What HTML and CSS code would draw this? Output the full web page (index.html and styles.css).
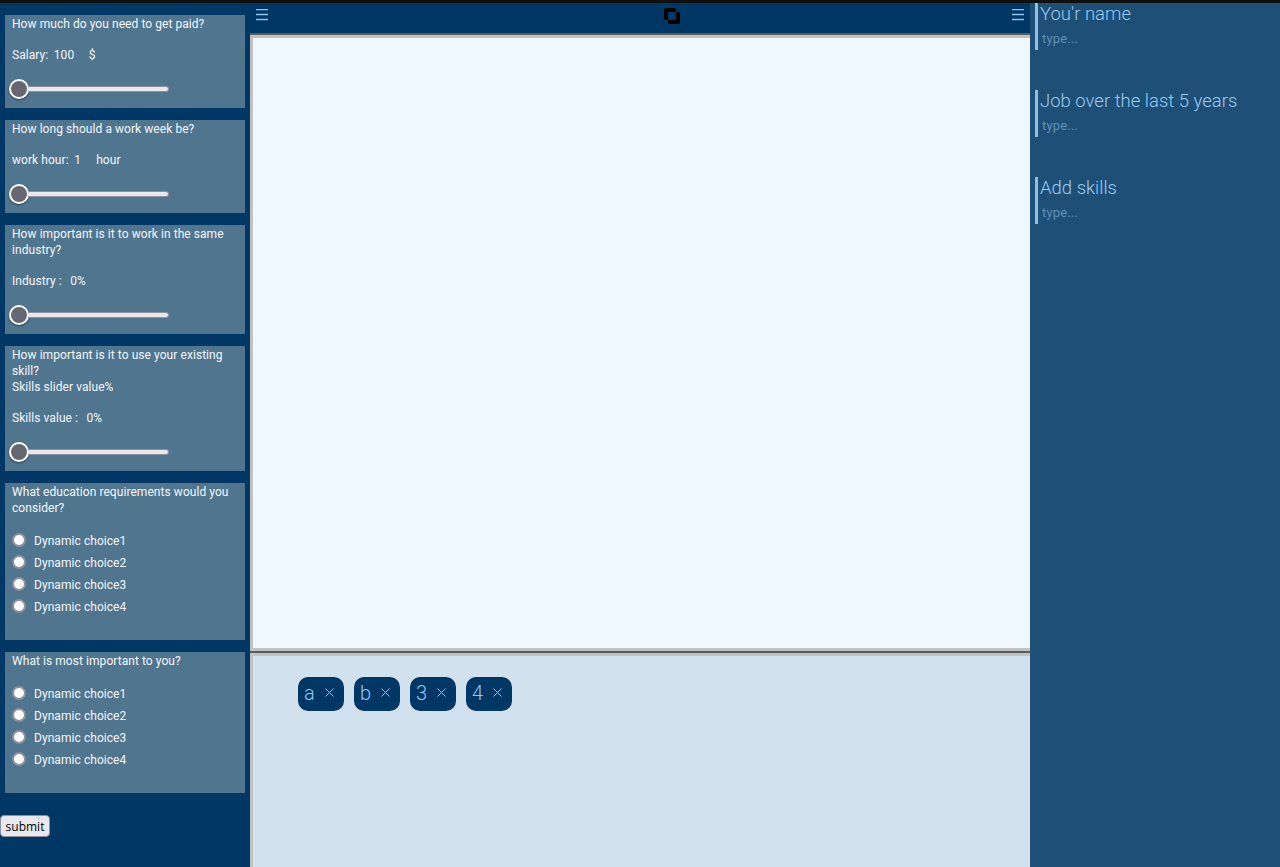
FILE: index.html
```html
<!DOCTYPE html>
<html lang="en">
<head>
<meta charset="utf-8">
<title>Job survey</title>
<link rel="stylesheet" href="styles.css">
</head>
<body>
<div class="app">
  <aside class="survey">
    <section class="card">
      <p class="question">How much do you need to get paid?</p>
      <p class="value"><span class="label">Salary:</span><span class="amount">100</span><span>$</span></p>
      <div class="slider"><span class="thumb"></span><span class="track"></span></div>
    </section>
    <section class="card">
      <p class="question">How long should a work week be?</p>
      <p class="value"><span class="label">work hour:</span><span class="amount short">1</span><span>hour</span></p>
      <div class="slider"><span class="thumb"></span><span class="track"></span></div>
    </section>
    <section class="card">
      <p class="question">How important is it to work in the same industry?</p>
      <p class="value"><span class="label wide">Industry :</span><span>0%</span></p>
      <div class="slider"><span class="thumb"></span><span class="track"></span></div>
    </section>
    <section class="card">
      <p class="question">How important is it to use your existing skill?<br>Skills slider value%</p>
      <p class="value"><span class="label wide">Skills value :</span><span>0%</span></p>
      <div class="slider"><span class="thumb"></span><span class="track"></span></div>
    </section>
    <section class="card">
      <p class="question">What education requirements would you consider?</p>
      <ul class="choices">
        <li><span class="radio"></span>Dynamic choice1</li>
        <li><span class="radio"></span>Dynamic choice2</li>
        <li><span class="radio"></span>Dynamic choice3</li>
        <li><span class="radio"></span>Dynamic choice4</li>
      </ul>
    </section>
    <section class="card">
      <p class="question">What is most important to you?</p>
      <ul class="choices">
        <li><span class="radio"></span>Dynamic choice1</li>
        <li><span class="radio"></span>Dynamic choice2</li>
        <li><span class="radio"></span>Dynamic choice3</li>
        <li><span class="radio"></span>Dynamic choice4</li>
      </ul>
    </section>
    <button class="submit">submit</button>
  </aside>
  <main class="center">
    <header class="bar">
      <svg class="menu" width="12" height="12" viewBox="0 0 12 12"><path d="M0 .5H12M0 5.5H12M0 10.5H12"/></svg>
      <svg class="logo" width="16" height="16" viewBox="0 0 16 16"><path fill-rule="evenodd" d="M1.5 0H10.5Q12 0 12 1.5V4H14.5Q16 4 16 5.500V14.500Q16 16 14.500 16H5.500Q4 16 4 14.500V12H1.500Q0 12 0 10.500V1.500Q0 0 1.500 0ZM4 4V12H12V4Z"/></svg>
      <svg class="menu" width="12" height="12" viewBox="0 0 12 12"><path d="M0 .5H12M0 5.5H12M0 10.5H12"/></svg>
    </header>
    <div class="canvas"></div>
    <div class="tags">
      <span class="tag">a<svg width="9" height="9" viewBox="0 0 9 9"><path d="M.5 .5L8.500 8.500M8.500 .5L.5 8.500"/></svg></span>
      <span class="tag">b<svg width="9" height="9" viewBox="0 0 9 9"><path d="M.5 .5L8.500 8.500M8.500 .5L.5 8.500"/></svg></span>
      <span class="tag">3<svg width="9" height="9" viewBox="0 0 9 9"><path d="M.5 .5L8.500 8.500M8.500 .5L.5 8.500"/></svg></span>
      <span class="tag">4<svg width="9" height="9" viewBox="0 0 9 9"><path d="M.5 .5L8.500 8.500M8.500 .5L.5 8.500"/></svg></span>
    </div>
  </main>
  <aside class="profile">
    <div class="field"><h2>You'r name</h2><p>type...</p></div>
    <div class="field"><h2>Job over the last 5 years</h2><p>type...</p></div>
    <div class="field"><h2>Add skills</h2><p>type...</p></div>
  </aside>
</div>
</body>
</html>
```
FILE: styles.css
```css
* { box-sizing: border-box; margin: 0; padding: 0; }
body {
  font-family: Roboto, sans-serif;
  font-size: 12px;
  line-height: 16px;
  background: #003764;
  overflow: hidden;
}
.app {
  display: grid;
  grid-template-columns: 250px 780px 250px;
  height: 867px;
  border-top: 3px solid #0f100d;
}
.survey {
  display: flex;
  flex-direction: column;
  align-items: stretch;
  gap: 12px;
  padding: 12px 5px 0;
  background: #003764;
  color: #f3f7fa;
}
.card { background: #50758f; padding: 1px 7px 0; letter-spacing: 0.06px; }
.value { display: flex; margin-top: 15px; }
.label { margin-right: 5.5px; }
.label.wide { margin-right: 8.5px; }
.amount { width: 35px; }
.amount.short { width: 22px; }
.slider {
  display: flex;
  align-items: center;
  height: 20px;
  width: 160px;
  margin: 16px 0 9px -3px;
}
.thumb {
  width: 20px;
  height: 20px;
  border: 2px solid #fff;
  border-radius: 50%;
  background: #676774;
  box-shadow: 0 1px 2px rgba(0, 0, 0, .45);
  flex: none;
}
.track {
  flex: 1;
  height: 6px;
  border: 1px solid #8f8f9d;
  border-left: 0;
  border-radius: 0 3px 3px 0;
  background: #e9e9ed;
}
.choices { list-style: none; padding: 14px 0 22px; }
.choices li { display: flex; align-items: center; height: 22px; }
.radio {
  width: 14px;
  height: 14px;
  margin: -2px 8px 0 0;
  border: 2px solid #8f8f9d;
  border-radius: 50%;
  background: #fff;
}
.submit {
  align-self: flex-start;
  width: 50px;
  height: 22px;
  padding-top: 1px;
  margin: 10px 0 0 -5px;
  border: 1px solid #8f8f9d;
  border-radius: 4px;
  background: #e9e9ed;
  color: #000;
  font: 12px/20px "Open Sans", sans-serif;
}
.center { display: grid; grid-template-rows: 30px 618px 1fr; min-height: 0; }
.bar {
  display: flex;
  justify-content: space-between;
  align-items: flex-start;
  padding: 6px 6px 0;
  background: #003764;
}
.menu { fill: none; stroke: #8cc1ed; stroke-width: 1.4; }
.logo { margin-top: -1px; position: relative; left: 32px; }
.canvas {
  border-top: 2px solid #5b5b57;
  box-shadow: inset 3px 3px #c2c2c2, inset 0 -3px #c2c2c2;
  background: #eff7ff;
}
.tags {
  display: flex;
  align-items: flex-start;
  gap: 10px;
  padding: 24px 48px;
  border-top: 2px solid #5b5b57;
  box-shadow: inset 3px 3px #c2c2c2;
  background: #d1e1ee;
}
.tag {
  display: flex;
  align-items: center;
  justify-content: space-between;
  width: 46px;
  height: 34px;
  padding: 0 10.5px 3px 6px;
  border-radius: 10px;
  background: #003764;
  color: #8fc6f3;
  font-size: 20px;
  font-weight: 300;
}
.tag svg { fill: none; stroke: #8cc1ed; stroke-width: 1; }
.profile {
  display: flex;
  flex-direction: column;
  gap: 40px;
  padding-left: 5px;
  background: #1e4f77;
}
.field { height: 47px; border-left: 3px solid #8fbfe4; padding-left: 2px; }
.field h2 {
  color: #9acbf1;
  font-size: 18.5px;
  font-weight: 300;
  line-height: 22px;
  letter-spacing: 0;
}
.field p {
  margin: 6px 0 0 2px;
  color: #5f90b6;
  font-size: 13px;
  font-weight: 400;
  letter-spacing: .15px;
}
```
